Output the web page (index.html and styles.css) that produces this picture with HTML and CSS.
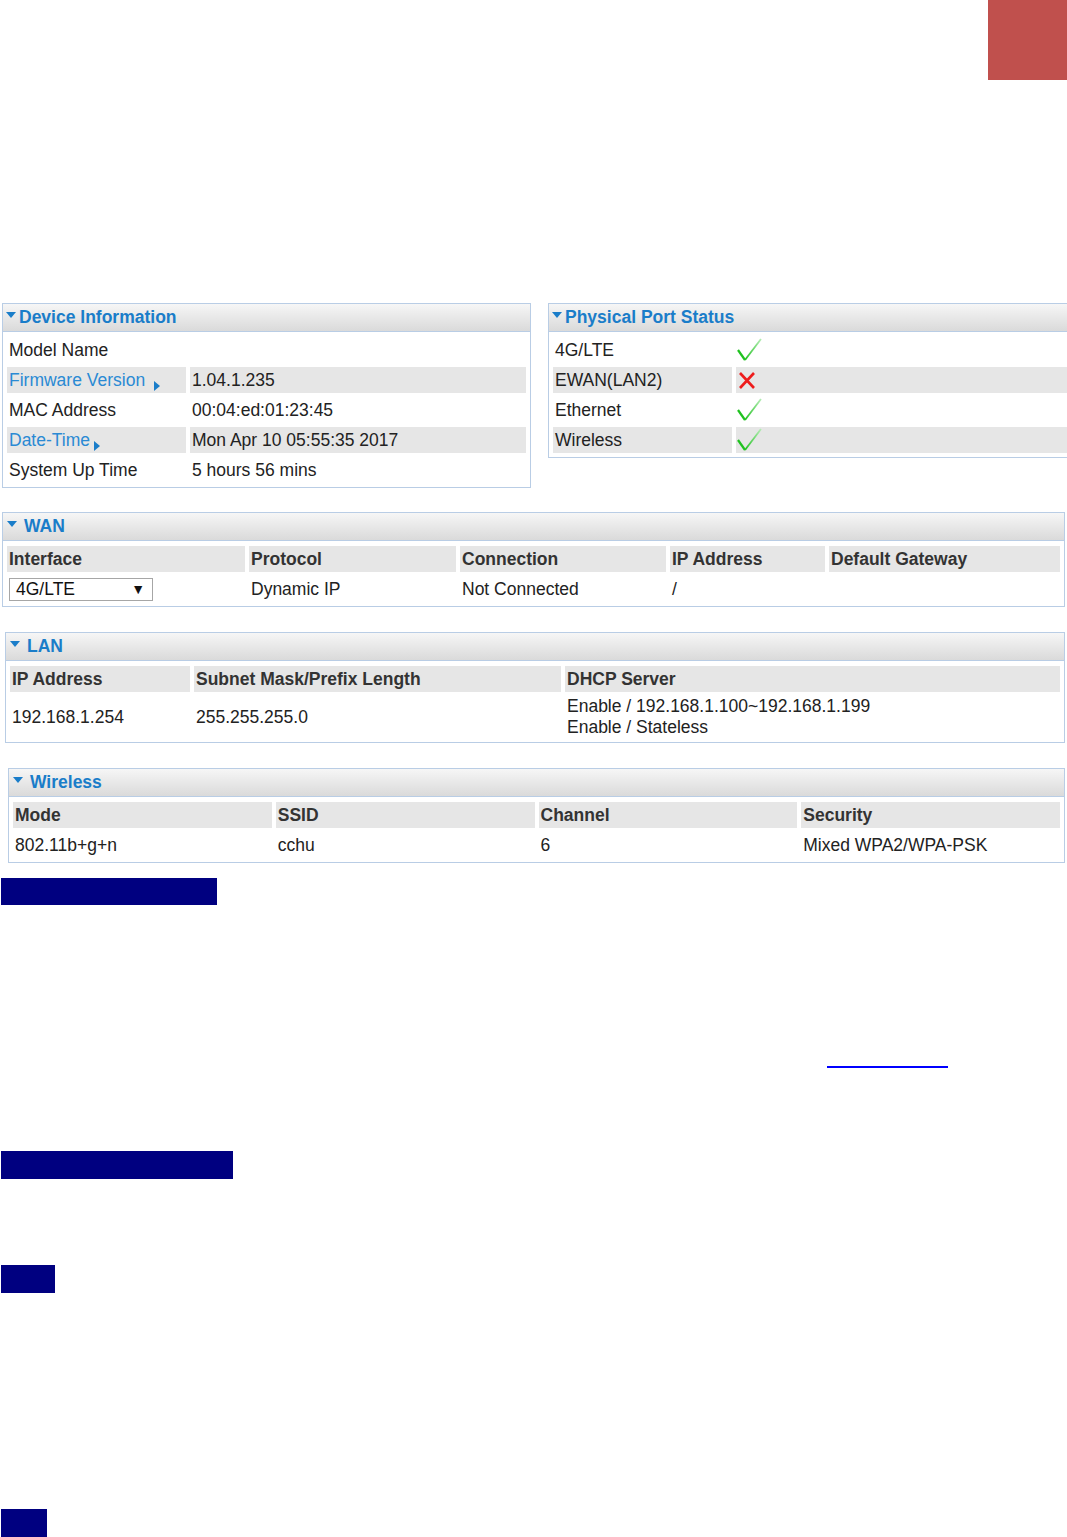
FILE: index.html
```html
<!DOCTYPE html>
<html>
<head>
<meta charset="utf-8">
<link rel="stylesheet" href="styles.css">
</head>
<body>
<div class="page">
  <div class="top"><div class="redbox"></div></div>

  <div class="row1">
    <section class="panel panel-dev">
      <div class="panel-head"><span class="tri tri-tight"></span>Device Information</div>
      <table class="grid">
        <colgroup><col class="c-dev1"><col></colgroup>
        <tr><td>Model Name</td><td></td></tr>
        <tr class="alt"><td><span class="link">Firmware Version</span><span class="arr arr-wide"></span></td><td>1.04.1.235</td></tr>
        <tr><td>MAC Address</td><td>00:04:ed:01:23:45</td></tr>
        <tr class="alt"><td><span class="link">Date-Time</span><span class="arr"></span></td><td>Mon Apr 10 05:55:35 2017</td></tr>
        <tr><td>System Up Time</td><td>5 hours 56 mins</td></tr>
      </table>
    </section>

    <section class="panel panel-port">
      <div class="panel-head"><span class="tri tri-tight"></span>Physical Port Status</div>
      <table class="grid">
        <colgroup><col class="c-dev1"><col></colgroup>
        <tr><td>4G/LTE</td><td><svg class="ok" width="28" height="26" viewBox="0 0 28 26"><defs><linearGradient id="g1" x1="0" y1="1" x2="1" y2="0"><stop offset="0" stop-color="#1fc21f"/><stop offset="1" stop-color="#b5ecb5"/></linearGradient></defs><path d="M2 13 L9 23" stroke="#1fc21f" stroke-width="2.2" fill="none"/><path d="M9 23 L25 2" stroke="url(#g1)" stroke-width="1.8" fill="none"/></svg></td></tr>
        <tr class="alt"><td>EWAN(LAN2)</td><td><svg class="no" width="18" height="18" viewBox="0 0 18 18"><path d="M2 2 L16 17 M16 2 L2 17" stroke="#ee1c1c" stroke-width="2.6" fill="none"/></svg></td></tr>
        <tr><td>Ethernet</td><td><svg class="ok" width="28" height="26" viewBox="0 0 28 26"><path d="M2 13 L9 23" stroke="#1fc21f" stroke-width="2.2" fill="none"/><path d="M9 23 L25 2" stroke="url(#g1)" stroke-width="1.8" fill="none"/></svg></td></tr>
        <tr class="alt"><td>Wireless</td><td><svg class="ok" width="28" height="26" viewBox="0 0 28 26"><path d="M2 13 L9 23" stroke="#1fc21f" stroke-width="2.2" fill="none"/><path d="M9 23 L25 2" stroke="url(#g1)" stroke-width="1.8" fill="none"/></svg></td></tr>
      </table>
    </section>
  </div>

  <section class="panel panel-wan">
    <div class="panel-head"><span class="tri"></span>WAN</div>
    <table class="grid">
      <colgroup><col class="w1"><col class="w2"><col class="w3"><col class="w4"><col></colgroup>
      <tr class="hdr"><th>Interface</th><th>Protocol</th><th>Connection</th><th>IP Address</th><th>Default Gateway</th></tr>
      <tr><td><span class="sel"><span>4G/LTE</span><span class="sel-arrow">▼</span></span></td><td>Dynamic IP</td><td>Not Connected</td><td>/</td><td></td></tr>
    </table>
  </section>

  <section class="panel panel-lan">
    <div class="panel-head"><span class="tri"></span>LAN</div>
    <table class="grid">
      <colgroup><col class="l1"><col class="l2"><col></colgroup>
      <tr class="hdr"><th>IP Address</th><th>Subnet Mask/Prefix Length</th><th>DHCP Server</th></tr>
      <tr class="tall"><td>192.168.1.254</td><td>255.255.255.0</td><td>Enable / 192.168.1.100~192.168.1.199<br>Enable / Stateless</td></tr>
    </table>
  </section>

  <section class="panel panel-wl">
    <div class="panel-head"><span class="tri"></span>Wireless</div>
    <table class="grid">
      <tr class="hdr"><th>Mode</th><th>SSID</th><th>Channel</th><th>Security</th></tr>
      <tr><td>802.11b+g+n</td><td>cchu</td><td>6</td><td>Mixed WPA2/WPA-PSK</td></tr>
    </table>
  </section>

  <div class="bar bar1"></div>
  <div class="uline"></div>
  <div class="bar bar2"></div>
  <div class="bar bar3"></div>
  <div class="bar bar4"></div>
</div>
</body>
</html>
```

FILE: styles.css
```css
html, body {
  margin: 0;
  padding: 0;
  background: #fff;
}
body {
  font-family: "Liberation Sans", Arial, sans-serif;
  font-size: 17.5px;
  color: #222;
  overflow-x: hidden;
}
.page {
  width: 1067px;
  overflow: hidden;
}
.top {
  height: 303px;
  display: flex;
  justify-content: flex-end;
  align-items: flex-start;
}
.redbox {
  width: 79px;
  height: 80px;
  background: #c0504d;
}
.row1 {
  display: flex;
  align-items: flex-start;
}
.panel {
  border: 1px solid #b9cde5;
  box-sizing: border-box;
  background: #fff;
  flex: none;
}
.panel-dev { margin-left: 2px; width: 529px; }
.panel-port { margin-left: 17px; width: 532px; }
.panel-wan { margin-left: 2px; width: 1063px; margin-top: 24px; }
.panel-lan { margin-left: 5px; width: 1060px; margin-top: 25px; }
.panel-wl { margin-left: 8px; width: 1057px; margin-top: 25px; }

.panel-head {
  height: 27px;
  border-bottom: 1px solid #b9cde5;
  background: linear-gradient(#f6f6f6, #dadada);
  display: flex;
  align-items: center;
  padding-left: 4px;
  color: #1a7dc9;
  font-weight: bold;
}
.panel-dev .panel-head, .panel-port .panel-head { padding-left: 3px; }
.tri {
  width: 0;
  height: 0;
  border-left: 5px solid transparent;
  border-right: 5px solid transparent;
  border-top: 6px solid #1a7dc9;
  align-self: flex-start;
  margin-top: 8px;
  margin-right: 7px;
}
.tri.tri-tight { margin-right: 3px; }

.grid {
  width: 100%;
  border-spacing: 4px;
  table-layout: fixed;
  margin-top: 1px;
}
.grid td, .grid th {
  height: 26px;
  padding: 0 2px;
  line-height: 21px;
  vertical-align: middle;
  text-align: left;
  white-space: nowrap;
}
.grid tr.alt td { background: #e6e6e6; }
.grid tr.hdr th {
  background: #e6e6e6;
  font-weight: bold;
  color: #333;
}
.grid tr.tall td { height: 41px; }

.c-dev1 { width: 179px; }
.w1 { width: 238px; }
.w2 { width: 207px; }
.w3 { width: 206px; }
.w4 { width: 155px; }
.l1 { width: 180px; }
.l2 { width: 367px; }

.link { color: #2a8ad4; }
.arr {
  display: inline-block;
  width: 0;
  height: 0;
  border-top: 5px solid transparent;
  border-bottom: 5px solid transparent;
  border-left: 6px solid #1a7dc9;
  vertical-align: -5px;
  margin-left: 4px;
}
.arr.arr-wide { margin-left: 9px; }

.ok { display: block; margin-left: -2px; }
.no { display: block; margin-left: 0; }

.sel {
  display: flex;
  align-items: center;
  justify-content: space-between;
  width: 144px;
  height: 23px;
  box-sizing: border-box;
  border: 1px solid #a6a6a6;
  background: #fff;
  padding: 0 7px 0 6px;
  color: #111;
}
.sel-arrow {
  font-size: 14px;
  color: #111;
}

.bar {
  background: #000080;
  margin-left: 1px;
  height: 28px;
}
.bar1 { width: 216px; height: 27px; margin-top: 15px; }
.uline {
  margin-top: 161px;
  margin-left: 827px;
  width: 121px;
  height: 2px;
  background: #0000ff;
}
.bar2 { width: 232px; margin-top: 83px; }
.bar3 { width: 54px; margin-top: 86px; }
.bar4 { width: 46px; margin-top: 216px; }
```
